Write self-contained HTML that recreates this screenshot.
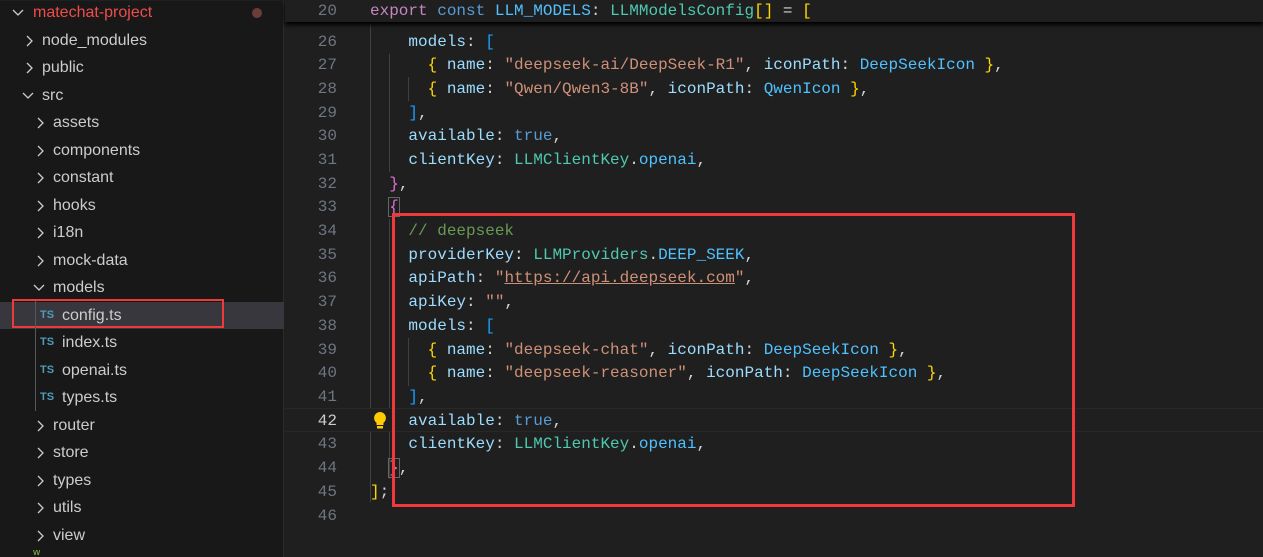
<!DOCTYPE html>
<html><head><meta charset="utf-8"><style>
*{margin:0;padding:0;box-sizing:border-box}
body{width:1263px;height:556px;overflow:hidden;background:#1f1f1f;position:relative;font-family:"Liberation Sans",sans-serif}
#side{position:absolute;left:0;top:1px;width:284px;height:556px;background:#181818;border-right:1px solid #2b2b2b}
.r{position:absolute;left:0;width:284px;height:27px;color:#cccccc;font-size:16px;line-height:27px;white-space:nowrap}
.ch{position:absolute;top:0;width:10px;height:27px}
.ch svg{position:absolute;top:8px;left:0}
.ts{position:absolute;color:#519aba;font-weight:bold;font-size:11px;top:0}
#ed{position:absolute;left:285px;top:0;right:0;bottom:0;font-family:"Liberation Mono",monospace;font-size:16px}
#code{position:absolute;left:0;right:0;top:1px;bottom:0}
.l{position:absolute;left:0;right:0;height:24px;line-height:24px;white-space:pre}
.n{position:absolute;width:52px;text-align:right;left:0;color:#6e7681}
.c{position:absolute;left:85px;color:#d4d4d4}
.p{color:#9cdcfe}.s{color:#ce9178}.k{color:#569cd6}.x{color:#c586c0}.v{color:#4fc1ff}.t{color:#4ec9b0}.cm{color:#6a9955}
.g{color:#ffd700}.m{color:#da70d6}.b{color:#179fff}
.gd{position:absolute;width:1px;background:#404040}
</style></head><body>
<div id="side">
<div class="r" style="top:-2px"><span class="ch" style="left:12px"><svg width="12" height="10"><path d="M1 3l5 5 5-5" stroke="#ccc" stroke-width="1.3" fill="none"/></svg></span><span style="position:absolute;left:33px;color:#f14c4c;font-size:16px">matechat-project</span><span style="position:absolute;left:252px;top:9px;width:10px;height:10px;border-radius:5px;background:#6b3c3a"></span></div>
<div class="r" style="top:26px"><span class="ch" style="left:25px"><svg width="8" height="12"><path d="M2 1l5 5-5 5" stroke="#ccc" stroke-width="1.3" fill="none"/></svg></span><span style="position:absolute;left:42px">node_modules</span></div>
<div class="r" style="top:53px"><span class="ch" style="left:25px"><svg width="8" height="12"><path d="M2 1l5 5-5 5" stroke="#ccc" stroke-width="1.3" fill="none"/></svg></span><span style="position:absolute;left:42px">public</span></div>
<div class="r" style="top:81px"><span class="ch" style="left:22px"><svg width="12" height="10"><path d="M1 3l5 5 5-5" stroke="#ccc" stroke-width="1.3" fill="none"/></svg></span><span style="position:absolute;left:42px">src</span></div>
<div class="r" style="top:108px"><span class="ch" style="left:36px"><svg width="8" height="12"><path d="M2 1l5 5-5 5" stroke="#ccc" stroke-width="1.3" fill="none"/></svg></span><span style="position:absolute;left:53px">assets</span></div>
<div class="r" style="top:136px"><span class="ch" style="left:36px"><svg width="8" height="12"><path d="M2 1l5 5-5 5" stroke="#ccc" stroke-width="1.3" fill="none"/></svg></span><span style="position:absolute;left:53px">components</span></div>
<div class="r" style="top:163px"><span class="ch" style="left:36px"><svg width="8" height="12"><path d="M2 1l5 5-5 5" stroke="#ccc" stroke-width="1.3" fill="none"/></svg></span><span style="position:absolute;left:53px">constant</span></div>
<div class="r" style="top:191px"><span class="ch" style="left:36px"><svg width="8" height="12"><path d="M2 1l5 5-5 5" stroke="#ccc" stroke-width="1.3" fill="none"/></svg></span><span style="position:absolute;left:53px">hooks</span></div>
<div class="r" style="top:218px"><span class="ch" style="left:36px"><svg width="8" height="12"><path d="M2 1l5 5-5 5" stroke="#ccc" stroke-width="1.3" fill="none"/></svg></span><span style="position:absolute;left:53px">i18n</span></div>
<div class="r" style="top:246px"><span class="ch" style="left:36px"><svg width="8" height="12"><path d="M2 1l5 5-5 5" stroke="#ccc" stroke-width="1.3" fill="none"/></svg></span><span style="position:absolute;left:53px">mock-data</span></div>
<div class="r" style="top:273px"><span class="ch" style="left:33px"><svg width="12" height="10"><path d="M1 3l5 5 5-5" stroke="#ccc" stroke-width="1.3" fill="none"/></svg></span><span style="position:absolute;left:53px">models</span></div>
<div class="r" style="top:301px;background:#37373d"><span class="ts" style="left:40px">TS</span><span style="position:absolute;left:62px">config.ts</span></div>
<div style="position:absolute;left:12px;top:298px;width:212px;height:29px;border:2px solid #f0393b"></div>
<div class="r" style="top:328px"><span class="ts" style="left:40px">TS</span><span style="position:absolute;left:62px">index.ts</span></div>
<div class="r" style="top:356px"><span class="ts" style="left:40px">TS</span><span style="position:absolute;left:62px">openai.ts</span></div>
<div class="r" style="top:383px"><span class="ts" style="left:40px">TS</span><span style="position:absolute;left:62px">types.ts</span></div>
<div style="position:absolute;left:35px;top:300px;width:1px;height:110px;background:#585858"></div>
<div class="r" style="top:411px"><span class="ch" style="left:36px"><svg width="8" height="12"><path d="M2 1l5 5-5 5" stroke="#ccc" stroke-width="1.3" fill="none"/></svg></span><span style="position:absolute;left:53px">router</span></div>
<div class="r" style="top:438px"><span class="ch" style="left:36px"><svg width="8" height="12"><path d="M2 1l5 5-5 5" stroke="#ccc" stroke-width="1.3" fill="none"/></svg></span><span style="position:absolute;left:53px">store</span></div>
<div class="r" style="top:466px"><span class="ch" style="left:36px"><svg width="8" height="12"><path d="M2 1l5 5-5 5" stroke="#ccc" stroke-width="1.3" fill="none"/></svg></span><span style="position:absolute;left:53px">types</span></div>
<div class="r" style="top:493px"><span class="ch" style="left:36px"><svg width="8" height="12"><path d="M2 1l5 5-5 5" stroke="#ccc" stroke-width="1.3" fill="none"/></svg></span><span style="position:absolute;left:53px">utils</span></div>
<div class="r" style="top:521px"><span class="ch" style="left:36px"><svg width="8" height="12"><path d="M2 1l5 5-5 5" stroke="#ccc" stroke-width="1.3" fill="none"/></svg></span><span style="position:absolute;left:53px">view</span></div>
<div style="position:absolute;left:33px;top:549px;width:14px;height:6px;color:#8dc149;font-size:10px;line-height:6px;overflow:hidden">w</div>
</div>
<div id="ed">
<div id="code">
<div class="gd" style="left:85px;top:21px;height:480px"></div>
<div class="gd" style="left:104px;top:53px;height:118px"></div>
<div class="gd" style="left:123px;top:76px;height:24px"></div>
<div class="gd" style="left:104px;top:218px;height:260px"></div>
<div class="gd" style="left:123px;top:337px;height:48px"></div>
<div class="l" style="top:407px;background:#1f1f1f;border-top:1px solid #282828;border-bottom:1px solid #282828"></div>
<div class="l" style="top:29px"><span class="n">26</span><span class="c">    <span class="p">models</span>: <span class="b">[</span></span></div>
<div class="l" style="top:52px"><span class="n">27</span><span class="c">      <span class="g">{</span> <span class="p">name</span>: <span class="s">"deepseek-ai/DeepSeek-R1"</span>, <span class="p">iconPath</span>: <span class="v">DeepSeekIcon</span> <span class="g">}</span>,</span></div>
<div class="l" style="top:76px"><span class="n">28</span><span class="c">      <span class="g">{</span> <span class="p">name</span>: <span class="s">"Qwen/Qwen3-8B"</span>, <span class="p">iconPath</span>: <span class="v">QwenIcon</span> <span class="g">}</span>,</span></div>
<div class="l" style="top:100px"><span class="n">29</span><span class="c">    <span class="b">]</span>,</span></div>
<div class="l" style="top:123px"><span class="n">30</span><span class="c">    <span class="p">available</span>: <span class="k">true</span>,</span></div>
<div class="l" style="top:147px"><span class="n">31</span><span class="c">    <span class="p">clientKey</span>: <span class="t">LLMClientKey</span>.<span class="v">openai</span>,</span></div>
<div class="l" style="top:171px"><span class="n">32</span><span class="c">  <span class="m">}</span>,</span></div>
<div class="l" style="top:194px"><span class="n">33</span><span class="c">  <span class="m" style="outline:1px solid #666">{</span></span></div>
<div class="l" style="top:218px"><span class="n">34</span><span class="c">    <span class="cm">// deepseek</span></span></div>
<div class="l" style="top:242px"><span class="n">35</span><span class="c">    <span class="p">providerKey</span>: <span class="t">LLMProviders</span>.<span class="v">DEEP_SEEK</span>,</span></div>
<div class="l" style="top:265px"><span class="n">36</span><span class="c">    <span class="p">apiPath</span>: <span class="s">"<u>https://api.deepseek.com</u>"</span>,</span></div>
<div class="l" style="top:289px"><span class="n">37</span><span class="c">    <span class="p">apiKey</span>: <span class="s">""</span>,</span></div>
<div class="l" style="top:313px"><span class="n">38</span><span class="c">    <span class="p">models</span>: <span class="b">[</span></span></div>
<div class="l" style="top:337px"><span class="n">39</span><span class="c">      <span class="g">{</span> <span class="p">name</span>: <span class="s">"deepseek-chat"</span>, <span class="p">iconPath</span>: <span class="v">DeepSeekIcon</span> <span class="g">}</span>,</span></div>
<div class="l" style="top:360px"><span class="n">40</span><span class="c">      <span class="g">{</span> <span class="p">name</span>: <span class="s">"deepseek-reasoner"</span>, <span class="p">iconPath</span>: <span class="v">DeepSeekIcon</span> <span class="g">}</span>,</span></div>
<div class="l" style="top:384px"><span class="n">41</span><span class="c">    <span class="b">]</span>,</span></div>
<div class="l" style="top:408px"><span class="n" style="color:#cccccc">42</span><span class="c">    <span class="p">available</span>: <span class="k">true</span>,</span></div>
<svg style="position:absolute;left:88px;top:410px" width="14" height="19"><path d="M7 1a6 6 0 0 0-3.5 10.8V14h7v-2.2A6 6 0 0 0 7 1z" fill="#ffcc00"/><rect x="4" y="15" width="6" height="2.5" fill="#ffcc00"/></svg>
<div class="l" style="top:431px"><span class="n">43</span><span class="c">    <span class="p">clientKey</span>: <span class="t">LLMClientKey</span>.<span class="v">openai</span>,</span></div>
<div class="l" style="top:455px"><span class="n">44</span><span class="c">  <span class="m" style="outline:1px solid #666">}</span>,</span></div>
<div class="l" style="top:479px"><span class="n">45</span><span class="c"><span class="g">]</span>;</span></div>
<div class="l" style="top:503px"><span class="n">46</span></div>
</div>
<div class="l" style="top:0;height:22px;line-height:22px;background:#1f1f1f;box-shadow:0 3px 4px #000"><span class="n" style="line-height:22px">20</span><span class="c"><span class="x">export</span> <span class="k">const</span> <span class="v">LLM_MODELS</span>: <span class="t">LLMModelsConfig</span><span class="g">[]</span> = <span class="g">[</span></span></div>
<div style="position:absolute;left:107px;top:213px;width:683px;height:294px;border:3px solid #f0393b"></div>
</div>
</body></html>
